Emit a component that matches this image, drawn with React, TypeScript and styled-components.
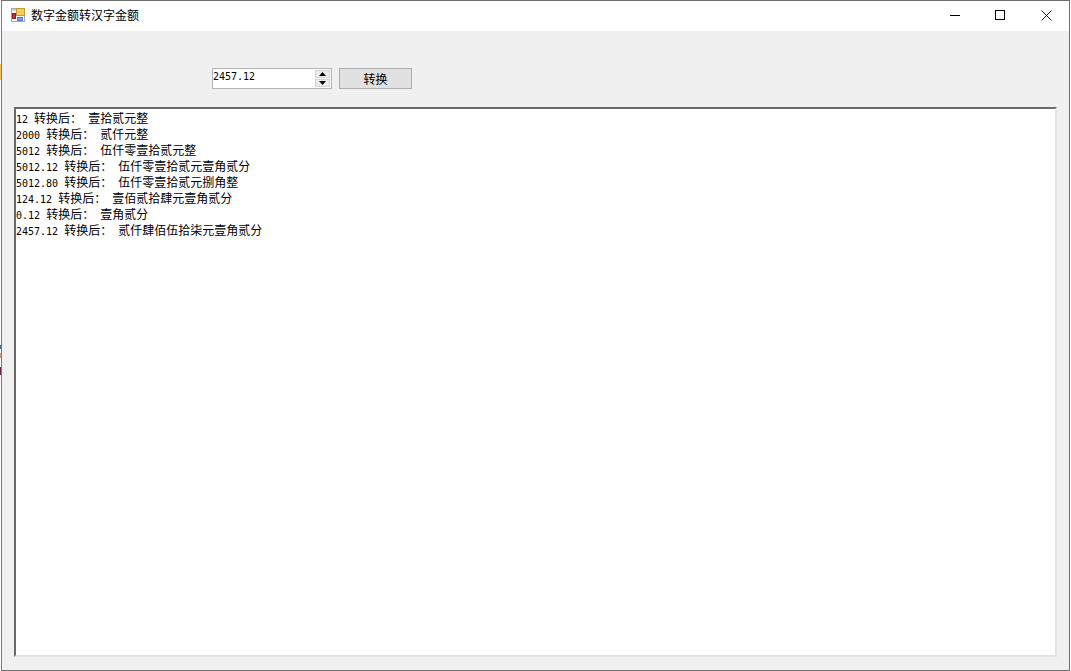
import React from "react";
import styled, { createGlobalStyle } from "styled-components";

const Global = createGlobalStyle`
  html, body { margin: 0; padding: 0; height: 100%; overflow: hidden; }
  body {
    width: 1071px;
    height: 671px;
    background:
      linear-gradient(#fff 0 64px, #e8c36a 64px 80px, #fff 80px 345px, #3c6ab0 345px 349px, #fff 349px 353px, #c9a36a 353px 358px, #fff 358px 367px, #6a2a50 367px 375px, #fff 375px 100%) left / 1px 100% no-repeat,
      #fff;
  }
  #root { height: 100%; }
`;

const Desktop = styled.div`
  width: 1071px;
  height: 671px;
  box-sizing: border-box;
  padding: 0 0 0 1px;
`;

const Window = styled.div`
  width: 1069px;
  height: 671px;
  box-sizing: border-box;
  border: 1px solid #6f6f6f;
  border-left-color: #7a7a7a;
  display: flex;
  flex-direction: column;
  background: #f0f0f0;
`;

const TitleBar = styled.div`
  height: 30px;
  flex: none;
  background: #fff;
  display: flex;
  align-items: center;
  padding-left: 9px;
`;

const TitleIcon = styled.svg`
  width: 15px;
  height: 15px;
  flex: none;
  margin-top: -1px;
`;

const TitleText = styled.span`
  margin-left: 5px;
  margin-top: -2px;
  font: 12px/16px "Noto Sans CJK SC", sans-serif;
  color: #000;
`;

const Controls = styled.div`
  margin-left: auto;
  display: flex;
  height: 100%;
`;

const CaptionButton = styled.div`
  width: 45px;
  height: 30px;
  display: flex;
  align-items: center;
  justify-content: center;
  margin-top: -1px;
`;

const CloseButton = styled(CaptionButton)`
  margin-left: 2px;
`;

const Client = styled.div`
  flex: 1;
  display: flex;
  flex-direction: column;
  padding: 37px 12px 13px 12px;
  min-height: 0;
`;

const Toolbar = styled.div`
  display: flex;
  align-items: stretch;
  height: 21px;
  padding-left: 198px;
  gap: 7px;
`;

const Spinner = styled.div`
  width: 120px;
  box-sizing: border-box;
  border: 1px solid #b4b4b4;
  background: #fff;
  display: flex;
  align-items: stretch;
`;

const SpinValue = styled.span`
  flex: 1;
  font: 10px/15px "DejaVu Sans Mono", monospace;
  color: #000;
`;

const SpinButtons = styled.div`
  width: 15px;
  margin: 0 1px 0 0;
  padding: 1px 0;
  display: flex;
  flex-direction: column;
  gap: 1px;
`;

const SpinArrow = styled.div`
  flex: 1;
  background: #ececec;
  border: 1px solid #d4d4d4;
  display: flex;
  align-items: center;
  justify-content: center;
  box-sizing: border-box;
`;

const Convert = styled.button`
  width: 73px;
  box-sizing: border-box;
  border: 1px solid #adadad;
  background: #e1e1e1;
  padding: 0;
  font: 12px/19px "Noto Sans CJK SC", sans-serif;
  color: #000;
`;

const Output = styled.div`
  margin-top: 18px;
  width: 1043px;
  height: 550px;
  box-sizing: border-box;
  border: 2px solid;
  border-color: #696969 #e3e3e3 #e3e3e3 #696969;
  background: #fff;
  padding: 1px 0 0 0;
  overflow: hidden;
`;

const Row = styled.div`
  height: 16px;
  font: 12px/16px "Noto Sans CJK SC", sans-serif;
  color: #000;
  white-space: pre;
`;

const Num = styled.span`
  font: 10px/16px "DejaVu Sans Mono", monospace;
`;

const rows: [string, string][] = [
  ["12", "壹拾贰元整"],
  ["2000", "贰仟元整"],
  ["5012", "伍仟零壹拾贰元整"],
  ["5012.12", "伍仟零壹拾贰元壹角贰分"],
  ["5012.80", "伍仟零壹拾贰元捌角整"],
  ["124.12", "壹佰贰拾肆元壹角贰分"],
  ["0.12", "壹角贰分"],
  ["2457.12", "贰仟肆佰伍拾柒元壹角贰分"],
];

export default function App() {
  return (
    <>
      <Global />
      <Desktop>
        <Window>
          <TitleBar>
            <TitleIcon viewBox="0 0 15 15">
              <rect x="0.5" y="0.5" width="13" height="13" fill="#fbfbfb" stroke="#a8a8a8" />
              <rect x="1" y="1" width="12" height="2" fill="#cfcfcf" />
              <rect x="5.5" y="0.5" width="8" height="7" fill="#f6cc5e" stroke="#c49a34" />
              <rect x="1.5" y="5.5" width="3" height="5" fill="#c8322a" stroke="#8a1f1a" />
              <rect x="6.5" y="9.5" width="5" height="3" fill="#7ea6e6" stroke="#4f7cc0" />
            </TitleIcon>
            <TitleText>数字金额转汉字金额</TitleText>
            <Controls>
              <CaptionButton>
                <svg width="10" height="10" viewBox="0 0 10 10"><path d="M0 5.5h10" stroke="#000" fill="none" /></svg>
              </CaptionButton>
              <CaptionButton>
                <svg width="10" height="10" viewBox="0 0 10 10"><rect x="0.5" y="0.5" width="9" height="9" stroke="#000" fill="none" /></svg>
              </CaptionButton>
              <CloseButton>
                <svg width="11" height="11" viewBox="0 0 11 11"><path d="M0.5 0.5l10 10M10.5 0.5l-10 10" stroke="#000" strokeWidth="0.9" fill="none" /></svg>
              </CloseButton>
            </Controls>
          </TitleBar>
          <Client>
            <Toolbar>
              <Spinner>
                <SpinValue>2457.12</SpinValue>
                <SpinButtons>
                  <SpinArrow>
                    <svg width="7" height="4" viewBox="0 0 7 4"><path d="M3.5 0L7 4H0z" fill="#000" /></svg>
                  </SpinArrow>
                  <SpinArrow>
                    <svg width="7" height="4" viewBox="0 0 7 4"><path d="M0 0h7L3.5 4z" fill="#000" /></svg>
                  </SpinArrow>
                </SpinButtons>
              </Spinner>
              <Convert>转换</Convert>
            </Toolbar>
            <Output>
              {rows.map(([n, t]) => (
                <Row key={n}>
                  <Num>{n} </Num>转换后：<Num> </Num>{t}
                </Row>
              ))}
            </Output>
          </Client>
        </Window>
      </Desktop>
    </>
  );
}
